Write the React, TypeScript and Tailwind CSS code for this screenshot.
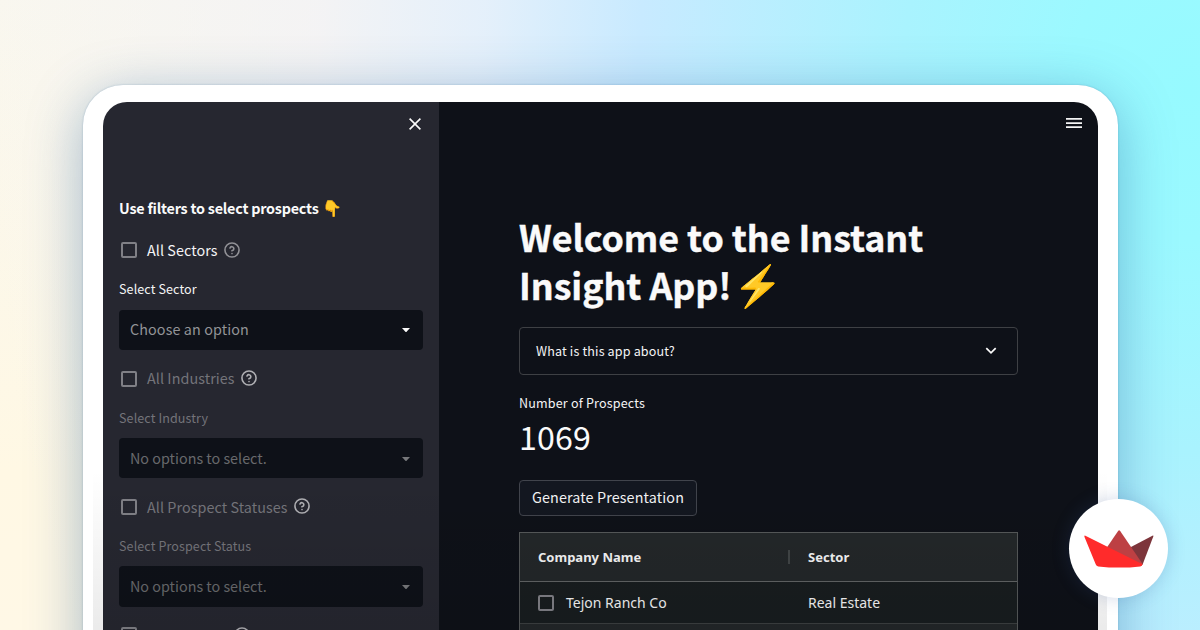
import type { ReactNode } from "react";

const sans = "font-['Noto_Sans_CJK_SC','Noto_Sans',sans-serif]";

function Checkbox() {
  return <span className="box-border size-4 shrink-0 rounded-[2px] border-2 border-[#808086]" />;
}

function HelpIcon({ className }: { className: string }) {
  return (
    <svg viewBox="0 0 24 24" className={`size-4 shrink-0 ${className}`} fill="none" stroke="currentColor" strokeWidth="2.4" strokeLinecap="round" strokeLinejoin="round">
      <circle cx="12" cy="12" r="10.6" />
      <path d="M9 9a3 3 0 0 1 5.83 1c0 2-3 3-3 3" />
      <path d="M12 17.4h.01" />
    </svg>
  );
}

function Filter({ check, label, placeholder, disabled }: { check: string; label: string; placeholder: string; disabled?: boolean }) {
  const tone = disabled ? "text-[#74747a]" : "text-[#f4f4f5]";
  return (
    <div className="mb-[16.9px] flex shrink-0 flex-col">
      <div className="flex h-6 items-center pl-[2px]">
        <Checkbox />
        <span className={`ml-[10px] text-[14.35px] leading-[23px] tracking-[0.07px] whitespace-nowrap ${disabled ? "pb-[2px]" : "pb-px"} ${tone}`}>{check}</span>
        <HelpIcon className={disabled ? "ml-[6px] -mt-[2px] text-[#b0b0b4]" : "ml-[6px] text-[#919196]"} />
      </div>
      <div className={`mt-[17px] h-5 text-[12.55px] leading-5 tracking-[0.1px] whitespace-nowrap ${tone}`}>{label}</div>
      <div className="mt-[10.3px] flex h-[40.2px] items-center justify-between rounded-[4px] bg-[#0e1118] pr-[13px] pl-[11px]">
        <span className={disabled ? "pb-[2px] text-[14.35px] leading-[23px] text-[#68696c]" : "pb-[2px] text-[14.35px] leading-[23px] tracking-[0.1px] text-[#939497]"}>{placeholder}</span>
        <svg viewBox="0 0 8 4" className={disabled ? "mt-px h-1 w-2 text-[#77787b]" : "mt-px h-1 w-2 text-[#fafafa]"}>
          <path d="M0 0h8L4.6 3.7a.9.9 0 0 1-1.2 0Z" fill="currentColor" />
        </svg>
      </div>
    </div>
  );
}

function Sidebar() {
  return (
    <aside className="flex w-[336px] shrink-0 flex-col bg-[#262730] px-4">
      <div className="flex h-11 shrink-0 items-center justify-end pr-[2px]">
        <svg viewBox="0 0 12 12" className="size-3" stroke="#fafafa" strokeWidth="1.6">
          <path d="M.6.6l10.8 10.8M11.4.6L.6 11.4" />
        </svg>
      </div>
      <div className="mt-[50px] flex h-6 shrink-0 items-center text-[14.35px] leading-6 font-bold tracking-[-0.22px] whitespace-nowrap text-[#fafafa]">
        <span>Use filters to select prospects</span>
        <span className="ml-[3px] pb-[2px] text-[16px] leading-[22px] tracking-normal">👇</span>
      </div>
      <div className="mt-[18.3px] flex flex-col">
        <Filter check="All Sectors" label="Select Sector" placeholder="Choose an option" />
        <Filter check="All Industries" label="Select Industry" placeholder="No options to select." disabled />
        <Filter check="All Prospect Statuses" label="Select Prospect Status" placeholder="No options to select." disabled />
        <div className="flex h-6 shrink-0 items-center pl-[2px]">
          <Checkbox />
          <HelpIcon className="-mt-px ml-[97px] text-[#b0b0b4]" />
        </div>
      </div>
    </aside>
  );
}

function Row({ children, className }: { children: ReactNode; className: string }) {
  return <div className={`grid shrink-0 grid-cols-[270px_1fr] items-center pl-[18px] ${className}`}>{children}</div>;
}

function Main() {
  return (
    <main className="flex flex-1 flex-col bg-[#0e1118] text-[#f4f4f5]">
      <div className="flex h-[42px] shrink-0 items-center justify-end pr-4">
        <svg viewBox="0 0 16 10" className="h-[10px] w-4" fill="#f4f4f4">
          <path d="M0 0h16v1.7H0zM0 4.2h16v1.7H0zM0 8.3h16V10H0z" />
        </svg>
      </div>
      <div className="flex flex-col pt-[68px] pr-20 pl-20">
        <h1 className="h-[99px] text-[35.8px] leading-[48px] font-bold tracking-[-0.05px] whitespace-nowrap text-[#fafafa] [-webkit-text-stroke:0.4px_#fafafa]">
          <span className="block h-12">Welcome to the Instant</span>
          <span className="flex h-12">
            Insight App!<span className="ml-px text-[40px] leading-[47px]">⚡</span>
          </span>
        </h1>
        <div className="mt-4 flex h-12 items-center justify-between rounded-[4px] border border-[#3e4044] pr-5 pl-4">
          <span className="text-[12.55px] leading-5 tracking-[0.15px]">What is this app about?</span>
          <svg viewBox="0 0 12 8" className="h-2 w-3" fill="none" stroke="#fafafa" strokeWidth="1.7">
            <path d="M1.3 1.2L6 5.9l4.7-4.7" />
          </svg>
        </div>
        <div className="mt-[18px] h-5 text-[12.55px] leading-5 tracking-[0.17px]">Number of Prospects</div>
        <div className="h-12 text-[32.2px] leading-[46px] tracking-[0.1px] text-[#fafafa]">1069</div>
        <div className="mt-[19px] flex h-9 w-[178px] items-center justify-center rounded-[4px] border border-[#41444c] bg-[#131720] pb-[2px] text-[14.35px] tracking-[0.12px] whitespace-nowrap">Generate Presentation</div>
        <div className="mt-4 flex h-[200px] flex-col border border-[#555859] font-['Noto_Sans',sans-serif] text-[14px]">
          <Row className="h-[49px] border-b border-[#606364] bg-[#232729] text-[13px] font-bold">
            <div className="flex items-center justify-between pr-[18px]">
              <span className="pt-[2px]">Company Name</span>
              <span className="h-[14px] w-[2px] bg-[#414546]" />
            </div>
            <span className="pt-[2px]">Sector</span>
          </Row>
          <Row className="h-[42px] border-b border-[#3c4041] bg-[#181d1f]">
            <div className="flex items-center">
              <Checkbox />
              <span className="ml-3">Tejon Ranch Co</span>
            </div>
            <span>Real Estate</span>
          </Row>
          <div className="flex-1 bg-[#232729]" />
        </div>
      </div>
    </main>
  );
}

export default function App() {
  return (
    <div
      className={`relative h-[630px] w-[1200px] overflow-hidden bg-[radial-gradient(ellipse_1200px_1500px_at_1190px_90px,#96faff_0%,#9bf9ff_10%,#a9f3fe_24%,#c8eaff_46%,rgba(226,239,252,0.9)_59%,rgba(242,242,246,0.75)_73%,rgba(255,248,228,0)_100%),linear-gradient(180deg,#f9f7ef_0%,#fff8e4_75%,#fff8e6_100%)] ${sans}`}
    >
      <div className="flex h-full flex-col px-[83px] pt-[85px]">
        <div className="w-[1035px] shrink-0 rounded-[40px] bg-white px-5 pt-[17px] shadow-[0_0_2px_rgba(50,100,150,0.35),0_12px_55px_rgba(30,90,150,0.4)]">
          <div className="flex h-[640px] overflow-hidden rounded-t-[24px]">
            <Sidebar />
            <Main />
          </div>
        </div>
      </div>
      <div className="absolute top-[470px] left-[93px] h-[160px] w-[1014px] bg-linear-to-b from-black/0 to-black/8" />
      <div className="absolute top-[499px] left-[1069px] flex size-[99px] items-center justify-center rounded-full bg-white shadow-[0_0_18px_rgba(50,80,150,0.22)]">
        <svg viewBox="0 0 70 38" className="h-[38px] w-[70px]">
          <path d="M46 17.5L68.4 5.7q1.4-.5.9.9L58.6 34.6 57 35Z" fill="#7d353b" />
          <path d="M22.5 18L34.3.7q.8-1.1 1.7 0L58.6 34 57 36Z" fill="#bd4043" />
          <path d="M1.4 5.7L58.6 34.3q-.4 1.9-2.4 2.1-20.5 2.4-42 0-1.8-.2-2.5-2.2L.5 6.9Q0 5.2 1.4 5.7Z" fill="#ff2b2b" />
        </svg>
      </div>
    </div>
  );
}
